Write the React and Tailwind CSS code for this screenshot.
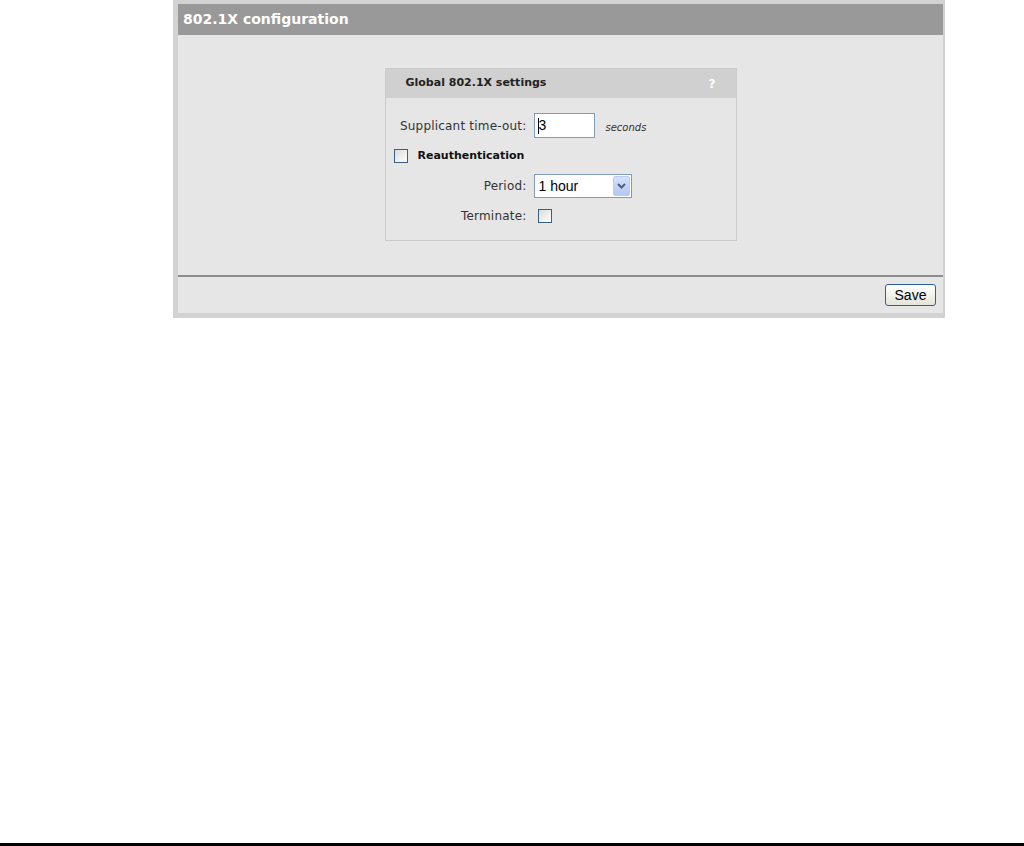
import React from "react";

// checkbox kecil gaya XP
function Box() {
  return (
    <span className="inline-block w-[14px] h-[14px] border border-[#3a5f85] bg-gradient-to-br from-[#dcdcd7] to-[#ffffff]" />
  );
}

export default function App() {
  return (
    <div className="relative w-[1024px] h-[846px] bg-white font-['DejaVu_Sans',sans-serif]">
      <div className="absolute left-0 right-0 top-[843px] h-[3px] bg-black" />

      <div className="ml-[173px] w-[772px] border-l-[5px] border-r-[2px] border-t-4 border-b-[5px] border-[#d2d2d2] bg-[#e6e6e6]">
        {/* judul */}
        <div className="h-[31px] bg-[#999999] flex items-center pl-[5px] text-white font-bold text-[14px]">
          802.1X configuration
        </div>

        {/* isi */}
        <div className="pt-[33px] pb-[34px] flex justify-center">
          <div className="w-[352px] border border-[#cbcbcb] bg-[#e6e6e6]">
            <div className="h-[29px] bg-[#d0d0d0] flex items-center justify-between pl-[20px] pr-[20px] text-[11px] font-bold text-[#222]">
              <span>Global 802.1X settings</span>
              <span className="text-white text-[12px]">?</span>
            </div>

            <div className="pt-[15px] pb-[17px] text-[12px] tracking-[0.2px] text-[#333]">
              <div className="flex items-center h-[25px]">
                <span className="w-[142px] text-right pr-[1px]">Supplicant time-out:</span>
                <div className="ml-[6px] w-[61px] h-[25px] bg-white border border-[#7f9db9] flex items-center pl-[3px] font-['Liberation_Sans',sans-serif] text-[14px] tracking-normal text-black">
                  <span className="inline-block w-px h-[16px] bg-black" />
                  <span>3</span>
                </div>
                <span className="ml-[11px] mt-[4px] italic text-[10px] tracking-normal text-[#333]">seconds</span>
              </div>

              <div className="flex items-center mt-[11px] pl-[8px] h-[14px]">
                <Box />
                <span className="ml-[10px] font-bold text-[11px] tracking-normal text-[#111]">Reauthentication</span>
              </div>

              <div className="flex items-center mt-[11px] h-[24px]">
                <span className="w-[142px] text-right pr-[1px]">Period:</span>
                <div className="ml-[6px] w-[98px] h-[24px] bg-white border border-[#7f9db9] flex items-center justify-between pl-[4px] pr-px font-['Liberation_Sans',sans-serif] text-[14px] tracking-normal text-black">
                  <span>1 hour</span>
                  <span className="w-[17px] h-[20px] rounded-[2px] bg-gradient-to-b from-[#d4e1fb] to-[#b3c8f5] border border-[#b9cdf4] flex items-center justify-center">
                    <svg width="9" height="6" viewBox="0 0 9 6">
                      <path d="M1 1 L4.5 4.5 L8 1" fill="none" stroke="#4d6185" strokeWidth="2" />
                    </svg>
                  </span>
                </div>
              </div>

              <div className="flex items-center mt-[11px] h-[14px]">
                <span className="w-[142px] text-right pr-[1px]">Terminate:</span>
                <span className="ml-[10px] flex">
                  <Box />
                </span>
              </div>
            </div>
          </div>
        </div>

        {/* tombol simpan */}
        <div className="border-t-2 border-[#8c8c8c] h-[38px] flex items-center justify-end pr-[7px]">
          <button className="w-[51px] h-[22px] rounded-[3px] border border-[#2f5e9c] bg-gradient-to-b from-[#ffffff] to-[#e4e4dc] font-['Liberation_Sans',sans-serif] text-[14px] text-black leading-none">
            Save
          </button>
        </div>
      </div>
    </div>
  );
}
